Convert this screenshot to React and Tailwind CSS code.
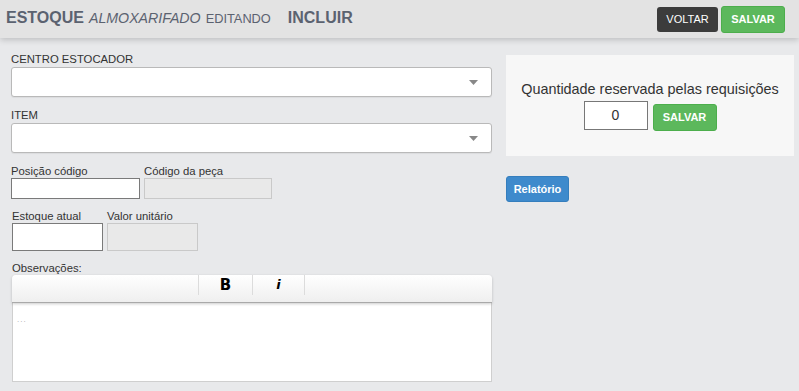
import React from "react";

function Caret() {
  return (
    <svg width="9" height="5" viewBox="0 0 9 5" className="shrink-0">
      <path d="M0 0 H9 L4.5 5 Z" fill="#888" />
    </svg>
  );
}

function SelectBox() {
  return (
    <div className="h-[30px] w-full bg-white border border-[#b9b9b9] rounded-[3px] flex items-center justify-end pr-[13px] shadow-[0_1px_1px_rgba(0,0,0,0.06)]">
      <Caret />
    </div>
  );
}

function Label({ children, className = "" }) {
  return <div className={`text-[11.3px] leading-[14px] text-[#333] ${className}`}>{children}</div>;
}

export default function App() {
  return (
    <div className="min-h-[391px] bg-[#e8e9eb] font-['Liberation_Sans',Arial,sans-serif]">
      {/* Header */}
      <div className="relative z-10 h-[38px] bg-[#e3e3e3] shadow-[0_2px_6px_rgba(0,0,0,0.18)] flex items-center justify-between pl-[6px] pr-[14px]">
        <div className="flex items-baseline text-[#5b6270] -mt-[2px]">
          <span className="text-[16px] font-bold">ESTOQUE</span>
          <span className="text-[14.2px] italic ml-[5px]">ALMOXARIFADO</span>
          <span className="text-[12.8px] ml-[5px]">EDITANDO</span>
          <span className="text-[16px] font-bold ml-[17px]">INCLUIR</span>
        </div>
        <div className="flex items-center gap-[3px]">
          <button className="h-[25px] w-[61px] bg-[#3c3c3c] text-white text-[11px] rounded-[3px]">VOLTAR</button>
          <button className="h-[27px] w-[64px] bg-[#5cb85c] border border-[#4cae4c] text-white text-[11px] font-bold rounded-[3px]">SALVAR</button>
        </div>
      </div>

      {/* Body */}
      <div className="flex pl-[11px] pr-[5px]">
        {/* Left column */}
        <div className="w-[481px] pt-[14px] pb-[8px]">
          <Label className="mb-[1px]">CENTRO ESTOCADOR</Label>
          <SelectBox />
          <Label className="mt-[11px] mb-[1px]">ITEM</Label>
          <SelectBox />

          <div className="flex mt-[11px] gap-[4px]">
            <div>
              <Label>Posição código</Label>
              <div className="h-[21px] w-[129px] bg-white border border-[#7a7a7a]" />
            </div>
            <div>
              <Label>Código da peça</Label>
              <div className="h-[21px] w-[128px] bg-[#e9e9e9] border border-[#c9c9c9]" />
            </div>
          </div>

          <div className="flex mt-[10px] gap-[4px] pl-[1px]">
            <div>
              <Label>Estoque atual</Label>
              <div className="h-[28px] w-[91px] bg-white border border-[#7a7a7a]" />
            </div>
            <div>
              <Label>Valor unitário</Label>
              <div className="h-[28px] w-[91px] bg-[#e9e9e9] border border-[#c9c9c9]" />
            </div>
          </div>

          <Label className="mt-[10px] pl-[1px]">Observações:</Label>
          <div className="ml-[1px]">
            <div className="h-[28px] rounded-t-[4px] bg-gradient-to-b from-white to-[#efefef] border-b border-[#a9a9a9] shadow-[0_1px_3px_rgba(0,0,0,0.2)] flex relative z-[1]">
              <div className="w-[186px]" />
              <div className="w-[54px] h-[20px] border-l border-[#dcdcdc] flex items-center justify-center font-['DejaVu_Sans',sans-serif] font-bold text-[15px] text-black">B</div>
              <div className="w-[53px] h-[20px] border-l border-r border-[#dcdcdc] flex items-center justify-center font-['DejaVu_Sans',sans-serif] font-bold italic text-[13px] text-black">i</div>
            </div>
            <div className="h-[79px] bg-white border border-[#cfcfcf] border-t-0 pl-[4px] pt-[2px]">
              <span className="text-[8px] leading-[10px] text-[#aaa] tracking-[1px]">...</span>
            </div>
          </div>
        </div>

        {/* Right column */}
        <div className="ml-[14px] w-[288px] pt-[17px]">
          <div className="h-[101px] bg-[#f7f7f7] pt-[24px] flex flex-col items-center">
            <div className="text-[14.4px] leading-[20px] text-[#333]">Quantidade reservada pelas requisições</div>
            <div className="flex items-start gap-[5px] mt-[2px]">
              <div className="h-[29px] w-[64px] bg-white border border-[#777] flex items-center justify-center text-[14px] text-[#333]">0</div>
              <button className="mt-[3px] h-[27px] w-[64px] bg-[#5cb85c] border border-[#4cae4c] text-white text-[11px] font-bold rounded-[3px]">SALVAR</button>
            </div>
          </div>
          <button className="mt-[20px] h-[26px] w-[63px] bg-[#3e8acc] border border-[#357ebd] text-white text-[11px] font-bold rounded-[3px]">Relatório</button>
        </div>
      </div>
    </div>
  );
}
